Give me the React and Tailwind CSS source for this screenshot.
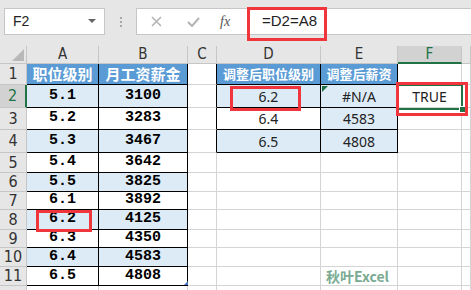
import React from 'react';

const COLS = [27, 72, 89, 29, 104, 77, 64];
const ROWS = [21, 23, 22, 23, 20, 19, 18, 20, 18, 19, 19];
const LETTERS = ['A', 'B', 'C', 'D', 'E', 'F', ''];

const colA = ['职位级别', '5.1', '5.2', '5.3', '5.4', '5.5', '6.1', '6.2', '6.3', '6.4', '6.5'];
const colB = ['月工资薪金', '3100', '3283', '3467', '3642', '3825', '3892', '4125', '4350', '4583', '4808'];
const colD = ['调整后职位级别', '6.2', '6.4', '6.5'];
const colE = ['调整后薪资', '#N/A', '4583', '4808'];

const inTable = (r, c) =>
  (r >= 1 && r <= 11 && (c === 1 || c === 2)) || (r >= 1 && r <= 4 && (c === 4 || c === 5));

const cellBg = (r, c) => {
  if (!inTable(r, c)) return 'bg-white';
  if (r === 1) return 'bg-[#5b9bd5]';
  if (c === 5) return 'bg-[#ddebf7]';
  return r % 2 === 0 ? 'bg-[#ddebf7]' : 'bg-white';
};

const Cell = ({ r, c }) => {
  const black = inTable(r, c) || inTable(r, c + 1);
  const blackB = inTable(r, c) || inTable(r + 1, c);
  const br = black ? 'border-r-black' : 'border-r-[#d4d4d4]';
  const bb = blackB ? 'border-b-black' : 'border-b-[#d4d4d4]';

  let content = null;
  if (r === 1 && (c === 1 || c === 2)) {
    content = (
      <span className="text-[15px] font-bold text-white [font-family:'Noto_Sans_CJK_SC',sans-serif]">
        {c === 1 ? colA[0] : colB[0]}
      </span>
    );
  } else if (r === 1 && (c === 4 || c === 5)) {
    content = (
      <span className="text-[13px] font-bold text-white [font-family:'Noto_Sans_CJK_SC',sans-serif]">
        {c === 4 ? colD[0] : colE[0]}
      </span>
    );
  } else if (c === 1 || c === 2) {
    content = (
      <span className="text-[15px] font-bold text-black [font-family:'Liberation_Mono',monospace]">
        {c === 1 ? colA[r - 1] : colB[r - 1]}
      </span>
    );
  } else if ((c === 4 || c === 5) && r <= 4) {
    content = (
      <span className="text-[14px] text-[#222] [font-family:'Noto_Sans',sans-serif]">
        {c === 4 ? colD[r - 1] : colE[r - 1]}
      </span>
    );
  } else if (c === 6 && r === 2) {
    content = <span className="text-[14px] text-[#222] [font-family:'Noto_Sans',sans-serif]">TRUE</span>;
  }

  return (
    <div className={`flex items-center justify-center overflow-hidden border-r border-b ${br} ${bb} ${cellBg(r, c)}`}>
      {content}
    </div>
  );
};

const Toolbar = () => (
  <div className="h-[46px] bg-[#e6e6e6] flex items-start pt-2 pl-1 gap-0">
    <div className="w-[101px] h-[27px] bg-white border border-[#c6c6c6] flex items-center justify-between pl-2 pr-2">
      <span className="text-[14px] text-[#222] [font-family:'Liberation_Sans',sans-serif]">F2</span>
      <svg width="8" height="5" viewBox="0 0 8 5">
        <path d="M0 0 L8 0 L4 4 Z" fill="#666" />
      </svg>
    </div>
    <div className="w-[31px] h-[27px] flex flex-col items-center justify-center gap-[2px]">
      <span className="w-[2px] h-[2px] bg-[#a8a8a8]" />
      <span className="w-[2px] h-[2px] bg-[#a8a8a8]" />
      <span className="w-[2px] h-[2px] bg-[#a8a8a8]" />
    </div>
    <div className="flex-1 h-[27px] bg-white border border-r-0 border-[#c6c6c6] flex items-center">
      <div className="w-[111px] h-full flex items-center">
        <svg className="ml-[14px]" width="11" height="11" viewBox="0 0 11 11">
          <path d="M1 1 L10 10 M10 1 L1 10" stroke="#b4b4b4" strokeWidth="1.6" />
        </svg>
        <svg className="ml-[25px]" width="13" height="10" viewBox="0 0 13 10">
          <path d="M1 5 L5 9 L12 1" stroke="#b4b4b4" strokeWidth="2" fill="none" />
        </svg>
        <span className="ml-[20px] text-[14px] italic text-[#555] [font-family:'Liberation_Serif',serif]">fx</span>
      </div>
      <div className="h-full border-l border-[#d4d4d4] flex items-center pl-[13px]">
        <span className="text-[15px] text-[#222] [font-family:'Liberation_Sans',sans-serif]">=D2=A8</span>
      </div>
    </div>
  </div>
);

export default function App() {
  const rows = [];
  // column header row
  rows.push(
    <div
      key="corner"
      className="relative bg-[#e6e6e6] border-r border-b border-[#c6c6c6]"
    >
      <svg className="absolute right-[2px] bottom-[2px]" width="12" height="12" viewBox="0 0 12 12">
        <path d="M12 0 L12 12 L0 12 Z" fill="#b8b8b8" />
      </svg>
    </div>
  );
  LETTERS.forEach((l, i) => {
    const sel = l === 'F';
    rows.push(
      <div
        key={`h${i}`}
        className={`flex items-center justify-center border-r border-[#c6c6c6] text-[15px] [font-family:'Liberation_Sans_Narrow','DejaVu_Sans_Condensed',sans-serif] ${
          sel ? 'bg-[#d2d2d2] border-b-2 border-b-[#217346] text-[#217346]' : 'bg-[#e6e6e6] border-b border-b-[#c6c6c6] text-[#333]'
        }`}
      >
        {l}
      </div>
    );
  });

  ROWS.forEach((_, ri) => {
    const r = ri + 1;
    const sel = r === 2;
    rows.push(
      <div
        key={`r${r}`}
        className={`flex items-center justify-center border-b border-b-[#c6c6c6] text-[16px] [font-family:'Liberation_Sans_Narrow','DejaVu_Sans_Condensed',sans-serif] ${
          sel ? 'bg-[#d2d2d2] border-r-2 border-r-[#217346] text-[#217346]' : 'bg-[#e6e6e6] border-r border-r-[#c6c6c6] text-[#333]'
        }`}
      >
        {r}
      </div>
    );
    for (let c = 1; c <= 7; c++) rows.push(<Cell key={`c${r}-${c}`} r={r} c={c} />);
  });

  // partial row 12
  rows.push(<div key="r12" className="bg-[#e6e6e6] border-r border-[#c6c6c6]" />);
  for (let c = 1; c <= 7; c++)
    rows.push(<div key={`c12-${c}`} className="bg-white border-r border-[#d4d4d4]" />);

  return (
    <div className="relative w-[471px] h-[290px] overflow-hidden bg-white">
      <Toolbar />
      <div
        className="grid"
        style={{
          gridTemplateColumns: `${COLS.map((w) => w + 'px').join(' ')} 1fr`,
          gridTemplateRows: `18px ${ROWS.map((h) => h + 'px').join(' ')} 4px`,
        }}
      >
        {rows}
      </div>

      {/* selection on F2 */}
      <div className="absolute left-[397px] top-[84px] w-[66px] h-[26px] border-2 border-[#217346]" />
      <div className="absolute left-[459px] top-[106px] w-[7px] h-[7px] bg-[#217346] border border-white" />

      {/* error indicator E2 */}
      <svg className="absolute left-[322px] top-[86px]" width="6" height="6" viewBox="0 0 6 6">
        <path d="M0 0 L6 0 L0 6 Z" fill="#1e7145" />
      </svg>
      {/* B11 corner */}
      <svg className="absolute left-[184px] top-[281px]" width="4" height="4" viewBox="0 0 4 4">
        <path d="M4 0 L4 4 L0 4 Z" fill="#4472c4" />
      </svg>

      {/* red annotation boxes */}
      <div className="absolute left-[247px] top-[7px] w-[80px] h-[34px] border-[3px] border-[#f0363c]" />
      <div className="absolute left-[230px] top-[86px] w-[71px] h-[25px] border-[3px] border-[#f0363c]" />
      <div className="absolute left-[36px] top-[210px] w-[56px] h-[22px] border-[3px] border-[#f0363c]" />
      <div className="absolute left-[396px] top-[82px] w-[72px] h-[34px] border-[3px] border-[#f0363c]" />

      {/* watermark */}
      <span className="absolute left-[326px] top-[266px] text-[14px] font-bold text-[#7aab92] [font-family:'Noto_Sans_CJK_SC',sans-serif]">
        秋叶Excel
      </span>
    </div>
  );
}
